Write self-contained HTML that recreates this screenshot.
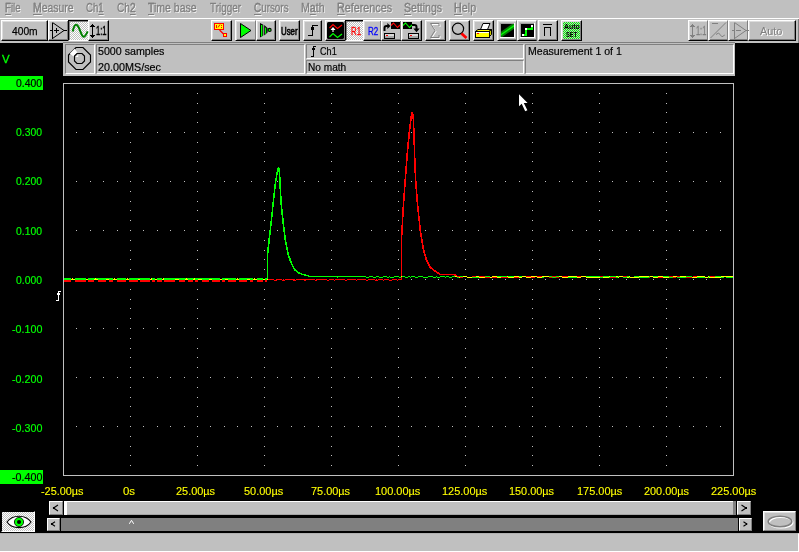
<!DOCTYPE html>
<html>
<head>
<meta charset="utf-8">
<title>Scope</title>
<style>
html,body{margin:0;padding:0;}
body{width:799px;height:552px;background:#000;overflow:hidden;position:relative;
 font-family:"Liberation Sans",sans-serif;font-size:11px;line-height:11px;color:#000;}
div,span,svg{position:absolute;box-sizing:border-box;}
.t{white-space:nowrap;transform-origin:0 0;display:block;}
#menubar{left:0;top:0;width:799px;height:18px;background:#c0c0c0;}
#menubar .t{top:2px;font-size:12.5px;line-height:13px;color:#808080;text-shadow:1px 1px 0 rgba(255,255,255,0.85);-webkit-text-stroke:0.3px #808080;}
#menubar u{text-decoration:underline;text-decoration-thickness:1px;text-underline-offset:1.5px;}
#tbline{left:0;top:18px;width:799px;height:1px;background:#fff;}
#toolbar{left:0;top:19px;width:799px;height:24px;background:#c0c0c0;border-right:1px solid #808080;}
.btn{background:#c0c0c0;height:21px;top:20px;border-top:1px solid #fff;border-left:1px solid #fff;border-right:1px solid #000;border-bottom:1px solid #000;
 box-shadow:inset -1px -1px 0 #808080, inset 1px 1px 0 #dcdcdc;overflow:hidden;}
.btn.down{border-top:1px solid #000;border-left:1px solid #000;border-right:1px solid #fff;border-bottom:1px solid #fff;
 box-shadow:inset 1px 1px 0 #808080;
 background-color:#c0c0c0;background-image:conic-gradient(#fff 25%,#c0c0c0 0 50%,#fff 0 75%,#c0c0c0 0);background-size:2px 2px;}
.btn svg{left:-1px;top:-1px;}
.dis{color:#808080;text-shadow:1px 1px 0 #fff;}
#panel{left:63px;top:42px;width:672px;height:34px;background:#c0c0c0;border-top:1px solid #808080;}
.sunk{background:#c0c0c0;border-top:1px solid #808080;border-left:1px solid #808080;border-right:1px solid #fff;border-bottom:1px solid #fff;}
.ylab{left:0;width:43px;height:14px;color:#00ff00;}
.ylab.hl{background:#00ff00;color:#000;}
.xlab{color:#ffff00;}
.sbtn{background:#c0c0c0;border-top:1px solid #fff;border-left:1px solid #fff;border-right:1px solid #808080;border-bottom:1px solid #808080;}
#status{left:0;top:533px;width:799px;height:19px;background:#c0c0c0;border-top:1px solid #b0b0b0;border-right:1px solid #fff;border-bottom:1px solid #fff;}
</style>
</head>
<body>
<div id="menubar">
<span class="t " style="left:5.20px;top:2.00px;font-size:12.50px;line-height:13px;transform:scaleX(0.7746);"><u>F</u>ile</span>
<span class="t " style="left:33.20px;top:2.00px;font-size:12.50px;line-height:13px;transform:scaleX(0.8349);"><u>M</u>easure</span>
<span class="t " style="left:86.45px;top:2.00px;font-size:12.50px;line-height:13px;transform:scaleX(0.7676);">Ch<u>1</u></span>
<span class="t " style="left:117.20px;top:2.00px;font-size:12.50px;line-height:13px;transform:scaleX(0.8112);">Ch<u>2</u></span>
<span class="t " style="left:147.70px;top:2.00px;font-size:12.50px;line-height:13px;transform:scaleX(0.8395);"><u>T</u>ime base</span>
<span class="t " style="left:210.20px;top:2.00px;font-size:12.50px;line-height:13px;transform:scaleX(0.7948);">Trigger</span>
<span class="t " style="left:254.20px;top:2.00px;font-size:12.50px;line-height:13px;transform:scaleX(0.7908);"><u>C</u>ursors</span>
<span class="t " style="left:300.95px;top:2.00px;font-size:12.50px;line-height:13px;transform:scaleX(0.8493);">M<u>a</u>th</span>
<span class="t " style="left:336.70px;top:2.00px;font-size:12.50px;line-height:13px;transform:scaleX(0.8620);"><u>R</u>eferences</span>
<span class="t " style="left:403.70px;top:2.00px;font-size:12.50px;line-height:13px;transform:scaleX(0.8436);"><u>S</u>ettings</span>
<span class="t " style="left:454.00px;top:2.00px;font-size:12.50px;line-height:13px;transform:scaleX(0.8597);"><u>H</u>elp</span>
</div>
<div id="tbline"></div>
<div id="toolbar"></div>
<div id="tb">
<div class="btn" style="left:1px;top:20px;width:47px;height:21px;"></div>
<div class="btn" style="left:48px;top:20px;width:21px;height:21px;"></div>
<div class="btn down" style="left:68px;top:20px;width:21px;height:21px;"></div>
<div class="btn" style="left:88px;top:20px;width:21px;height:21px;"></div>
<div class="btn" style="left:211px;top:20px;width:21px;height:21px;"></div>
<div class="btn" style="left:235px;top:20px;width:21px;height:21px;border-right-color:#808080;box-shadow:inset 1px 1px 0 #dcdcdc, inset 0 -1px 0 #808080;"></div>
<div class="btn" style="left:256px;top:20px;width:20px;height:21px;"></div>
<div class="btn" style="left:279px;top:20px;width:21px;height:21px;"></div>
<div class="btn" style="left:303px;top:20px;width:19px;height:21px;"></div>
<div class="btn" style="left:325px;top:20px;width:21px;height:21px;"></div>
<div class="btn down" style="left:345px;top:20px;width:19px;height:21px;"></div>
<div class="btn" style="left:363px;top:20px;width:19px;height:21px;border-right-color:#808080;"></div>
<div class="btn" style="left:381px;top:20px;width:21px;height:21px;border-right-color:#808080;"></div>
<div class="btn" style="left:401px;top:20px;width:21px;height:21px;"></div>
<div class="btn" style="left:425px;top:20px;width:21px;height:21px;"></div>
<div class="btn" style="left:449px;top:20px;width:21px;height:21px;"></div>
<div class="btn" style="left:473px;top:20px;width:21px;height:21px;"></div>
<div class="btn" style="left:497px;top:20px;width:20px;height:21px;border-right-color:#808080;box-shadow:inset 1px 1px 0 #dcdcdc, inset 0 -1px 0 #808080;"></div>
<div class="btn" style="left:517px;top:20px;width:20px;height:21px;border-right-color:#808080;box-shadow:inset 1px 1px 0 #dcdcdc, inset 0 -1px 0 #808080;"></div>
<div class="btn" style="left:538px;top:20px;width:20px;height:21px;"></div>
<div class="btn" style="left:561px;top:20px;width:21px;height:21px;background-image:conic-gradient(#00ff00 25%,#c0c0c0 0 50%,#00ff00 0 75%,#c0c0c0 0);background-size:2px 2px;"></div>
<div class="btn" style="left:688px;top:20px;width:20px;height:21px;border-right-color:#808080;box-shadow:inset 1px 1px 0 #dcdcdc, inset 0 -1px 0 #808080;"></div>
<div class="btn" style="left:708px;top:20px;width:20px;height:21px;border-right-color:#808080;box-shadow:inset 1px 1px 0 #dcdcdc, inset 0 -1px 0 #808080;"></div>
<div class="btn" style="left:728px;top:20px;width:20px;height:21px;border-right-color:#808080;box-shadow:inset 1px 1px 0 #dcdcdc, inset 0 -1px 0 #808080;"></div>
<div class="btn" style="left:748px;top:20px;width:48px;height:21px;"></div>
<span class="t " style="left:11.60px;top:25.00px;font-size:11.50px;line-height:13px;transform:scaleX(0.8900);-webkit-text-stroke:0.25px #000;">400m</span>
<span class="t " style="left:95.60px;top:24.50px;font-size:12.00px;line-height:13px;transform:scaleX(0.6355);-webkit-text-stroke:0.45px #000;">1:1</span>
<span class="t " style="left:350.60px;top:26.00px;font-size:10.00px;line-height:11px;transform:scaleX(0.7823);color:#ff0000;-webkit-text-stroke:0.3px #ff0000;">R1</span>
<span class="t " style="left:368.00px;top:25.70px;font-size:10.00px;line-height:11px;transform:scaleX(0.7979);color:#0000ff;-webkit-text-stroke:0.3px #0000ff;">R2</span>
<span class="t " style="left:695.60px;top:24.50px;font-size:12.00px;line-height:13px;transform:scaleX(0.6175);color:#808080;-webkit-text-stroke:0.3px #808080;">1:1</span>
<span class="t dis" style="left:760.20px;top:24.50px;font-size:11.50px;line-height:13px;transform:scaleX(0.9469);">Auto</span>
<span class="t " style="left:281.30px;top:25.80px;font-size:10.00px;line-height:11px;transform:scaleX(0.7863);-webkit-text-stroke:0.55px #000;">User</span>
<span class="t " style="left:563.80px;top:21.80px;font-size:7.50px;line-height:9px;transform:scaleX(0.9253);font-weight:bold;">Auto</span>
<span class="t " style="left:565.80px;top:29.50px;font-size:7.50px;line-height:9px;transform:scaleX(0.7678);font-weight:bold;">SET</span>
</div>
<svg id="icons" width="799" height="60" viewBox="0 0 799 60" style="left:0;top:0;" shape-rendering="crispEdges"><path d="M52.5 22.5 L52.5 38.5" fill="none" stroke="#000" stroke-width="1" />
<path d="M52.5 22.5 L64.0 30.5 L52.5 38.5" fill="none" stroke="#000" stroke-width="1" shape-rendering="geometricPrecision"/>
<path d="M50.0 30.5 L52.0 30.5" fill="none" stroke="#000" stroke-width="1" />
<path d="M64.0 30.5 L67.0 30.5" fill="none" stroke="#000" stroke-width="1" />
<path d="M54.0 30.5 L59.0 30.5" fill="none" stroke="#000" stroke-width="1" />
<path d="M56.5 28.0 L56.5 33.0" fill="none" stroke="#000" stroke-width="1" />
<path d="M72.7 31.5 C73.7 27 74.7 24.8 76.2 24.8 C78.2 24.8 79.2 29 80.2 31 C81.2 33.5 82.2 36.8 83.7 36.8 C85.2 36.8 86.7 33.5 87.7 31.3" fill="none" stroke="#008000" stroke-width="2" shape-rendering="geometricPrecision"/>
<path d="M92.5 25.0 L92.5 37.0" fill="none" stroke="#000" stroke-width="1" />
<polygon points="92.5,23.5 95.0,27.0 90.0,27.0" fill="#000" stroke="none" stroke-width="1" />
<polygon points="92.5,38.5 95.0,35.0 90.0,35.0" fill="#000" stroke="none" stroke-width="1" />
<rect x="214" y="23" width="10" height="7" fill="#ff0000" />
<rect x="215" y="24" width="8" height="5" fill="#ffff00" />
<rect x="216" y="25" width="1" height="3" fill="#ff0000" />
<path d="M218.0 27.5 L220.0 24.5" fill="none" stroke="#ff0000" stroke-width="1" shape-rendering="geometricPrecision"/>
<rect x="221" y="25" width="1" height="1" fill="#ff0000" />
<rect x="221" y="27" width="1" height="1" fill="#ff0000" />
<path d="M219.5 30.0 L225.0 35.5" fill="none" stroke="#ff0000" stroke-width="1.3" shape-rendering="geometricPrecision"/>
<rect x="223" y="33" width="4" height="4" fill="#ff0000" />
<rect x="224" y="34" width="2" height="2" fill="#ffff00" />
<polygon points="240.5,23.5 251.0,30.5 240.5,37.5" fill="#00ff00" stroke="#000" stroke-width="1" shape-rendering="geometricPrecision"/>
<polygon points="260.0,23.0 263.3,24.8 263.3,35.6 260.0,37.4" fill="#000" stroke="none" stroke-width="1" shape-rendering="geometricPrecision"/>
<rect x="261" y="25" width="1.4" height="11.4" fill="#00ff00" shape-rendering="geometricPrecision"/>
<polygon points="264.2,25.0 267.6,28.0 267.6,32.4 264.2,35.4" fill="#000" stroke="none" stroke-width="1" shape-rendering="geometricPrecision"/>
<rect x="265" y="27.6" width="1.2" height="6.2" fill="#00ff00" shape-rendering="geometricPrecision"/>
<circle cx="269.6" cy="29.9" r="2.1" fill="#000" shape-rendering="geometricPrecision"/>
<circle cx="269.6" cy="29.9" r="1" fill="#00ff00" shape-rendering="geometricPrecision"/>
<path d="M308.0 35.5 L313.0 35.5" fill="none" stroke="#000" stroke-width="1" />
<path d="M312.5 25.0 L312.5 36.0" fill="none" stroke="#000" stroke-width="1" />
<path d="M312.0 25.5 L318.0 25.5" fill="none" stroke="#000" stroke-width="1" />
<rect x="311" y="27" width="3" height="3" fill="#000" />
<rect x="327" y="22" width="17" height="17" rx="1.5" fill="#000" shape-rendering="geometricPrecision"/>
<path d="M329.5 28.0 L333.0 24.5 L337.5 28.5 L342.0 25.0" fill="none" stroke="#ff0000" stroke-width="1.2" shape-rendering="geometricPrecision"/>
<path d="M329.5 37.0 L333.0 33.5 L337.5 37.5 L342.0 34.0" fill="none" stroke="#00ff00" stroke-width="1.2" shape-rendering="geometricPrecision"/>
<path d="M333.0 28.5 L333.0 32.0" fill="none" stroke="#fff" stroke-width="1.1" shape-rendering="geometricPrecision"/>
<polygon points="333.0,27.0 335.5,30.0 330.5,30.0" fill="#fff" stroke="none" stroke-width="1" shape-rendering="geometricPrecision"/>
<rect x="391" y="22" width="9" height="7" fill="#000" />
<path d="M391.0 25.5 L393.5 23.0 L397.5 27.5 L400.0 25.0" fill="none" stroke="#ff0000" stroke-width="1.1" shape-rendering="geometricPrecision"/>
<path d="M384.5 31 V28 Q384.5 26 386.5 26 H388" fill="none" stroke="#000" stroke-width="2" shape-rendering="geometricPrecision"/>
<polygon points="387.3,23.0 390.5,26.0 387.3,29.0" fill="#000" stroke="none" stroke-width="1" shape-rendering="geometricPrecision"/>
<rect x="384" y="33" width="11" height="6" fill="#000" />
<rect x="385" y="34" width="9" height="4" fill="#d8d8d8" />
<rect x="385" y="36" width="9" height="2" fill="#a8a8a8" />
<rect x="386" y="35" width="2" height="1" fill="#ff0000" />
<rect x="403" y="22" width="9" height="7" fill="#000" />
<path d="M403.0 25.5 L405.5 23.0 L409.5 27.5 L412.0 25.0" fill="none" stroke="#00ff00" stroke-width="1.1" shape-rendering="geometricPrecision"/>
<path d="M412 25 H414.5 Q416.5 25 416.5 27 V29" fill="none" stroke="#000" stroke-width="2" shape-rendering="geometricPrecision"/>
<polygon points="413.3,28.6 419.7,28.6 416.5,32.2" fill="#000" stroke="none" stroke-width="1" shape-rendering="geometricPrecision"/>
<rect x="408" y="33" width="11" height="6" fill="#000" />
<rect x="409" y="34" width="9" height="4" fill="#d8d8d8" />
<rect x="409" y="36" width="9" height="2" fill="#a8a8a8" />
<rect x="410" y="35" width="2" height="1" fill="#ff0000" />
<path d="M440.0 27.0 L440.0 24.5 L431.5 24.5 L436.0 31.5 L431.5 38.5 L440.0 38.5 L440.0 36.0" fill="none" stroke="#fff" stroke-width="1" shape-rendering="geometricPrecision"/>
<path d="M439.0 26.0 L439.0 23.5 L430.5 23.5 L435.0 30.5 L430.5 37.5 L439.0 37.5 L439.0 35.0" fill="none" stroke="#808080" stroke-width="1" shape-rendering="geometricPrecision"/>
<circle cx="458" cy="28.8" r="5.6" fill="none" stroke="#000" stroke-width="1.2" shape-rendering="geometricPrecision"/>
<path d="M461.5 33.5 L466.5 38.0" fill="none" stroke="#ff0000" stroke-width="2.8" shape-rendering="geometricPrecision"/>
<polygon points="483.0,23.5 490.0,23.5 487.5,29.5 480.5,29.5" fill="#fff" stroke="#000" stroke-width="1" shape-rendering="geometricPrecision"/>
<polygon points="478.0,29.5 491.5,29.5 489.0,31.5 475.5,31.5" fill="#ffff00" stroke="#000" stroke-width="1" shape-rendering="geometricPrecision"/>
<polygon points="491.5,29.5 491.5,34.5 489.0,37.0 489.0,31.5" fill="#c8c800" stroke="#000" stroke-width="1" shape-rendering="geometricPrecision"/>
<rect x="475" y="31" width="15" height="7" fill="#000" />
<rect x="476" y="32" width="13" height="5" fill="#ffff00" />
<rect x="476" y="32" width="13" height="1" fill="#fff" />
<rect x="477" y="33" width="2" height="1" fill="#ff0000" />
<rect x="500" y="23" width="15" height="15" fill="#fff" />
<rect x="500" y="23" width="14" height="14" fill="#a0a0a0" />
<rect x="501" y="24" width="13" height="13" fill="#000" />
<clipPath id="c1"><rect x="501" y="24" width="13" height="13"/></clipPath>
<g clip-path="url(#c1)" shape-rendering="geometricPrecision"><path d="M500 35.5 L515 25" stroke="#008000" stroke-width="5" fill="none"/><path d="M500 35.5 L515 25" stroke="#00ff00" stroke-width="1.3" fill="none"/></g>
<rect x="520" y="23" width="15" height="15" fill="#fff" />
<rect x="520" y="23" width="14" height="14" fill="#a0a0a0" />
<rect x="521" y="24" width="13" height="13" fill="#000" />
<path d="M523.0 35.0 L526.0 35.0 L526.0 29.0 L532.0 29.0 L532.0 26.0" fill="none" stroke="#00ff00" stroke-width="2" />
<rect x="522" y="34" width="2" height="2" fill="#fff" />
<rect x="525" y="28" width="2" height="2" fill="#fff" />
<rect x="531" y="25" width="2" height="2" fill="#fff" />
<path d="M543.0 24.5 L552.0 24.5" fill="none" stroke="#000" stroke-width="1" />
<path d="M544.5 35.5 L544.5 27.5 L550.5 27.5 L550.5 35.5" fill="none" stroke="#000" stroke-width="1" />
<path d="M692.5 25.0 L692.5 37.0" fill="none" stroke="#808080" stroke-width="1" />
<polygon points="692.5,23.5 695.0,27.0 690.0,27.0" fill="#808080" stroke="none" stroke-width="1" />
<polygon points="692.5,38.5 695.0,35.0 690.0,35.0" fill="#808080" stroke="none" stroke-width="1" />
<path d="M710.5 38.0 L726.0 22.5" fill="none" stroke="#808080" stroke-width="1" shape-rendering="geometricPrecision"/>
<path d="M712.0 23.5 L718.0 23.5" fill="none" stroke="#808080" stroke-width="1" />
<path d="M716.0 34.5 L718.6 33.0 L722.0 36.8 L724.8 35.0" fill="none" stroke="#808080" stroke-width="1" shape-rendering="geometricPrecision"/>
<path d="M734.5 22.5 L734.5 38.5" fill="none" stroke="#808080" stroke-width="1" />
<path d="M734.5 22.5 L746.0 30.5 L734.5 38.5" fill="none" stroke="#808080" stroke-width="1" shape-rendering="geometricPrecision"/>
<path d="M732.0 30.5 L734.0 30.5" fill="none" stroke="#808080" stroke-width="1" />
<path d="M746.0 30.5 L749.0 30.5" fill="none" stroke="#808080" stroke-width="1" />
<path d="M736.0 30.5 L741.0 30.5" fill="none" stroke="#808080" stroke-width="1" /></svg>
<div id="panel"></div>
<div class="sunk" style="left:65px;top:44px;width:30px;height:30px;"></div>
<div class="sunk" style="left:96px;top:44px;width:209px;height:30px;"></div>
<div class="sunk" style="left:306px;top:44px;width:218px;height:15px;"></div>
<div class="sunk" style="left:306px;top:60px;width:218px;height:14px;"></div>
<div class="sunk" style="left:525px;top:44px;width:209px;height:30px;"></div>
<span class="t " style="left:98.30px;top:44.50px;font-size:11.00px;line-height:12px;transform:scaleX(0.9696);-webkit-text-stroke:0.2px #000;">5000 samples</span>
<span class="t " style="left:98.30px;top:61.00px;font-size:11.00px;line-height:12px;transform:scaleX(0.9814);-webkit-text-stroke:0.2px #000;">20.00MS/sec</span>
<span class="t " style="left:319.75px;top:44.50px;font-size:11.00px;line-height:12px;transform:scaleX(0.8301);-webkit-text-stroke:0.2px #000;">Ch1</span>
<span class="t " style="left:307.90px;top:61.00px;font-size:11.00px;line-height:12px;transform:scaleX(0.9189);-webkit-text-stroke:0.2px #000;">No math</span>
<span class="t " style="left:528.00px;top:44.50px;font-size:11.00px;line-height:12px;transform:scaleX(0.9589);-webkit-text-stroke:0.2px #000;">Measurement 1 of 1</span>
<svg width="799" height="40" viewBox="0 40 799 40" style="left:0;top:40px;" shape-rendering="crispEdges"><polygon points="76,47.5 83,47.5 90.5,55 90.5,62 83,69.5 76,69.5 68.5,62 68.5,55" fill="none" stroke="#000" stroke-width="1.15" shape-rendering="geometricPrecision"/>
<polygon points="69.8,53.6 74.6,48.8 77.4,52.6 73.6,56.4" fill="#fff" shape-rendering="geometricPrecision"/>
<polygon points="77,53.5 82,53.5 84.5,56 84.5,61 82,63.5 77,63.5 74.5,61 74.5,56" fill="none" stroke="#000" stroke-width="1.15" shape-rendering="geometricPrecision"/>
<polygon points="75.4,57 78.2,54.8 78.2,57" fill="#fff" shape-rendering="geometricPrecision"/>
<path d="M311 56.5 H314 M313.5 46 V57 M313 46.5 H316" stroke="#000" stroke-width="1" fill="none"/>
<rect x="312" y="48" width="3" height="2" fill="#000"/></svg>
<svg id="plot" width="799" height="420" viewBox="0 80 799 420" style="left:0;top:80px;" shape-rendering="crispEdges"><rect x="63.5" y="83.5" width="670" height="392" fill="none" stroke="#c0c0c0" stroke-width="1"/>
<path d="M130 93h1M130 103h1M130 112h1M130 122h1M130 132h1M130 142h1M130 152h1M130 161h1M130 171h1M130 181h1M130 191h1M130 201h1M130 210h1M130 220h1M130 230h1M130 240h1M130 250h1M130 259h1M130 269h1M130 279h1M130 289h1M130 299h1M130 308h1M130 318h1M130 328h1M130 338h1M130 348h1M130 357h1M130 367h1M130 377h1M130 387h1M130 397h1M130 406h1M130 416h1M130 426h1M130 436h1M130 446h1M130 455h1M130 465h1M197 93h1M197 103h1M197 112h1M197 122h1M197 132h1M197 142h1M197 152h1M197 161h1M197 171h1M197 181h1M197 191h1M197 201h1M197 210h1M197 220h1M197 230h1M197 240h1M197 250h1M197 259h1M197 269h1M197 279h1M197 289h1M197 299h1M197 308h1M197 318h1M197 328h1M197 338h1M197 348h1M197 357h1M197 367h1M197 377h1M197 387h1M197 397h1M197 406h1M197 416h1M197 426h1M197 436h1M197 446h1M197 455h1M197 465h1M264 93h1M264 103h1M264 112h1M264 122h1M264 132h1M264 142h1M264 152h1M264 161h1M264 171h1M264 181h1M264 191h1M264 201h1M264 210h1M264 220h1M264 230h1M264 240h1M264 250h1M264 259h1M264 269h1M264 279h1M264 289h1M264 299h1M264 308h1M264 318h1M264 328h1M264 338h1M264 348h1M264 357h1M264 367h1M264 377h1M264 387h1M264 397h1M264 406h1M264 416h1M264 426h1M264 436h1M264 446h1M264 455h1M264 465h1M331 93h1M331 103h1M331 112h1M331 122h1M331 132h1M331 142h1M331 152h1M331 161h1M331 171h1M331 181h1M331 191h1M331 201h1M331 210h1M331 220h1M331 230h1M331 240h1M331 250h1M331 259h1M331 269h1M331 279h1M331 289h1M331 299h1M331 308h1M331 318h1M331 328h1M331 338h1M331 348h1M331 357h1M331 367h1M331 377h1M331 387h1M331 397h1M331 406h1M331 416h1M331 426h1M331 436h1M331 446h1M331 455h1M331 465h1M398 93h1M398 103h1M398 112h1M398 122h1M398 132h1M398 142h1M398 152h1M398 161h1M398 171h1M398 181h1M398 191h1M398 201h1M398 210h1M398 220h1M398 230h1M398 240h1M398 250h1M398 259h1M398 269h1M398 279h1M398 289h1M398 299h1M398 308h1M398 318h1M398 328h1M398 338h1M398 348h1M398 357h1M398 367h1M398 377h1M398 387h1M398 397h1M398 406h1M398 416h1M398 426h1M398 436h1M398 446h1M398 455h1M398 465h1M465 93h1M465 103h1M465 112h1M465 122h1M465 132h1M465 142h1M465 152h1M465 161h1M465 171h1M465 181h1M465 191h1M465 201h1M465 210h1M465 220h1M465 230h1M465 240h1M465 250h1M465 259h1M465 269h1M465 279h1M465 289h1M465 299h1M465 308h1M465 318h1M465 328h1M465 338h1M465 348h1M465 357h1M465 367h1M465 377h1M465 387h1M465 397h1M465 406h1M465 416h1M465 426h1M465 436h1M465 446h1M465 455h1M465 465h1M532 93h1M532 103h1M532 112h1M532 122h1M532 132h1M532 142h1M532 152h1M532 161h1M532 171h1M532 181h1M532 191h1M532 201h1M532 210h1M532 220h1M532 230h1M532 240h1M532 250h1M532 259h1M532 269h1M532 279h1M532 289h1M532 299h1M532 308h1M532 318h1M532 328h1M532 338h1M532 348h1M532 357h1M532 367h1M532 377h1M532 387h1M532 397h1M532 406h1M532 416h1M532 426h1M532 436h1M532 446h1M532 455h1M532 465h1M599 93h1M599 103h1M599 112h1M599 122h1M599 132h1M599 142h1M599 152h1M599 161h1M599 171h1M599 181h1M599 191h1M599 201h1M599 210h1M599 220h1M599 230h1M599 240h1M599 250h1M599 259h1M599 269h1M599 279h1M599 289h1M599 299h1M599 308h1M599 318h1M599 328h1M599 338h1M599 348h1M599 357h1M599 367h1M599 377h1M599 387h1M599 397h1M599 406h1M599 416h1M599 426h1M599 436h1M599 446h1M599 455h1M599 465h1M666 93h1M666 103h1M666 112h1M666 122h1M666 132h1M666 142h1M666 152h1M666 161h1M666 171h1M666 181h1M666 191h1M666 201h1M666 210h1M666 220h1M666 230h1M666 240h1M666 250h1M666 259h1M666 269h1M666 279h1M666 289h1M666 299h1M666 308h1M666 318h1M666 328h1M666 338h1M666 348h1M666 357h1M666 367h1M666 377h1M666 387h1M666 397h1M666 406h1M666 416h1M666 426h1M666 436h1M666 446h1M666 455h1M666 465h1M76 132h1M90 132h1M103 132h1M117 132h1M143 132h1M157 132h1M170 132h1M184 132h1M210 132h1M224 132h1M237 132h1M251 132h1M277 132h1M291 132h1M304 132h1M318 132h1M344 132h1M358 132h1M371 132h1M385 132h1M411 132h1M425 132h1M438 132h1M452 132h1M478 132h1M492 132h1M505 132h1M519 132h1M545 132h1M559 132h1M572 132h1M586 132h1M612 132h1M626 132h1M639 132h1M653 132h1M679 132h1M693 132h1M706 132h1M720 132h1M76 181h1M90 181h1M103 181h1M117 181h1M143 181h1M157 181h1M170 181h1M184 181h1M210 181h1M224 181h1M237 181h1M251 181h1M277 181h1M291 181h1M304 181h1M318 181h1M344 181h1M358 181h1M371 181h1M385 181h1M411 181h1M425 181h1M438 181h1M452 181h1M478 181h1M492 181h1M505 181h1M519 181h1M545 181h1M559 181h1M572 181h1M586 181h1M612 181h1M626 181h1M639 181h1M653 181h1M679 181h1M693 181h1M706 181h1M720 181h1M76 230h1M90 230h1M103 230h1M117 230h1M143 230h1M157 230h1M170 230h1M184 230h1M210 230h1M224 230h1M237 230h1M251 230h1M277 230h1M291 230h1M304 230h1M318 230h1M344 230h1M358 230h1M371 230h1M385 230h1M411 230h1M425 230h1M438 230h1M452 230h1M478 230h1M492 230h1M505 230h1M519 230h1M545 230h1M559 230h1M572 230h1M586 230h1M612 230h1M626 230h1M639 230h1M653 230h1M679 230h1M693 230h1M706 230h1M720 230h1M76 279h1M90 279h1M103 279h1M117 279h1M143 279h1M157 279h1M170 279h1M184 279h1M210 279h1M224 279h1M237 279h1M251 279h1M277 279h1M291 279h1M304 279h1M318 279h1M344 279h1M358 279h1M371 279h1M385 279h1M411 279h1M425 279h1M438 279h1M452 279h1M478 279h1M492 279h1M505 279h1M519 279h1M545 279h1M559 279h1M572 279h1M586 279h1M612 279h1M626 279h1M639 279h1M653 279h1M679 279h1M693 279h1M706 279h1M720 279h1M76 328h1M90 328h1M103 328h1M117 328h1M143 328h1M157 328h1M170 328h1M184 328h1M210 328h1M224 328h1M237 328h1M251 328h1M277 328h1M291 328h1M304 328h1M318 328h1M344 328h1M358 328h1M371 328h1M385 328h1M411 328h1M425 328h1M438 328h1M452 328h1M478 328h1M492 328h1M505 328h1M519 328h1M545 328h1M559 328h1M572 328h1M586 328h1M612 328h1M626 328h1M639 328h1M653 328h1M679 328h1M693 328h1M706 328h1M720 328h1M76 377h1M90 377h1M103 377h1M117 377h1M143 377h1M157 377h1M170 377h1M184 377h1M210 377h1M224 377h1M237 377h1M251 377h1M277 377h1M291 377h1M304 377h1M318 377h1M344 377h1M358 377h1M371 377h1M385 377h1M411 377h1M425 377h1M438 377h1M452 377h1M478 377h1M492 377h1M505 377h1M519 377h1M545 377h1M559 377h1M572 377h1M586 377h1M612 377h1M626 377h1M639 377h1M653 377h1M679 377h1M693 377h1M706 377h1M720 377h1M76 426h1M90 426h1M103 426h1M117 426h1M143 426h1M157 426h1M170 426h1M184 426h1M210 426h1M224 426h1M237 426h1M251 426h1M277 426h1M291 426h1M304 426h1M318 426h1M344 426h1M358 426h1M371 426h1M385 426h1M411 426h1M425 426h1M438 426h1M452 426h1M478 426h1M492 426h1M505 426h1M519 426h1M545 426h1M559 426h1M572 426h1M586 426h1M612 426h1M626 426h1M639 426h1M653 426h1M679 426h1M693 426h1M706 426h1M720 426h1" stroke="#c0c0c0" stroke-width="1" fill="none" transform="translate(0,0.5)"/>
<path d="M426 257v5M406 153v21M414 128v45M419 216v15M411 112v9M429 264v4M404 179v22M422 239v10M405 166v21M416 181v21M410 116v13M421 233v10M409 124v15M413 114v31M402 207v28M403 193v24M401 225v51M401 277v3M425 254v6M418 206v15M428 262v4M415 158v31M424 250v6M408 132v17M407 142v19M417 194v18M420 225v12M423 245v8M412 112v7M430 266v3M427 260v4" stroke="#ff0000" stroke-width="1" fill="none" transform="translate(0.5,0)"/>
<path d="M64 281h7M75 281h11M88 281h6M98 281h8M109 281h4M117 281h9M129 281h9M140 281h10M152 281h3M157 281h5M164 281h11M179 281h6M188 281h5M195 281h3M202 281h7M212 281h8M222 281h3M228 281h8M239 281h8M250 281h3M257 281h6M265 281h2M460 277h3M485 277h5M492 277h5M501 277h7M514 277h5M531 277h4M549 277h3M556 277h3M610 277h6M649 277h1M658 277h5M673 277h3M686 277h6M268 279h6M276 279h6M283 279h1M285 279h10M296 279h19M316 279h11M329 279h5M335 279h10M347 279h9M357 279h9M368 279h7M376 279h1M378 279h5M384 279h5M392 279h5M398 279h3M64 280h7M75 280h11M88 280h6M98 280h8M109 280h4M117 280h9M129 280h9M140 280h10M152 280h3M157 280h5M164 280h11M179 280h6M188 280h5M195 280h3M202 280h7M212 280h8M222 280h3M228 280h8M239 280h8M250 280h3M257 280h6M265 280h2M274 280h3M282 280h3M293 280h3M304 280h2M315 280h2M327 280h2M334 280h1M345 280h2M356 280h1M366 280h2M375 280h3M383 280h1M389 280h3M397 280h1M439 274h17M457 276h3M472 276h4M479 276h6M526 276h5M537 276h5M552 276h4M562 276h6M577 276h4M600 276h3M623 276h4M669 276h4M677 276h3M693 276h4M710 276h5M431 267h1M454 275h3M433 270h3M437 273h3M436 272h3M432 269h2M434 271h3M431 268h2" stroke="#ff0000" stroke-width="1" fill="none" transform="translate(0,0.5)"/>
<path d="M280 177v28M282 209v15M271 212v14M276 172v9M279 168v21M285 235v10M270 221v14M275 178v11M288 252v6M269 230v14M281 196v19M291 261v4M274 184v14M292 264v3M284 227v13M268 238v15M273 193v14M267 247v32M278 167v5M287 247v8M290 258v5M293 266v3M286 242v8M272 202v15M277 168v7M283 218v14M289 256v5M294 268v3" stroke="#00ff00" stroke-width="1" fill="none" transform="translate(0.5,0)"/>
<path d="M64 278h7M75 278h11M88 278h7M96 278h17M117 278h9M129 278h21M152 278h3M157 278h5M164 278h22M187 278h7M195 278h25M222 278h14M239 278h14M257 278h6M265 278h2M308 276h58M369 276h4M376 276h3M383 276h4M389 276h1M394 276h5M402 276h3M408 276h2M411 276h4M418 276h5M428 276h5M436 276h1M440 276h5M446 276h3M452 276h3M460 276h3M485 276h5M497 276h10M508 276h6M519 276h3M549 276h3M556 276h3M586 276h14M603 276h6M610 276h6M618 276h1M627 276h2M634 276h5M649 276h1M653 276h5M663 276h6M686 276h6M709 276h1M715 276h6M337 277h1M366 277h3M373 277h3M379 277h4M387 277h2M390 277h4M399 277h2M405 277h3M410 277h1M415 277h3M423 277h5M433 277h3M437 277h3M445 277h1M449 277h3M457 277h2M472 277h7M542 277h2M552 277h4M568 277h9M600 277h3M609 277h1M616 277h2M623 277h4M629 277h1M639 277h10M669 277h4M677 277h9M697 277h8M708 277h1M721 277h3M726 277h7M64 279h7M75 279h11M88 279h6M98 279h8M109 279h4M117 279h9M129 279h9M140 279h10M152 279h3M157 279h5M164 279h11M179 279h6M188 279h5M195 279h3M202 279h7M212 279h8M222 279h3M228 279h8M239 279h8M250 279h3M257 279h6M265 279h2M298 273h4M301 274h5M295 270h2M295 269h1M297 272h3M304 275h5M296 271h2" stroke="#00ff00" stroke-width="1" fill="none" transform="translate(0,0.5)"/>
<path d="M459 277h1M467 277h5M479 277h6M490 277h2M497 277h4M508 277h6M519 277h3M526 277h5M537 277h5M562 277h6M577 277h4M586 277h14M603 277h6M618 277h1M627 277h2M630 277h9M653 277h5M663 277h6M692 277h5M705 277h3M709 277h12M72 278h1M95 278h1M114 278h1M127 278h1M151 278h1M163 278h1M186 278h1M194 278h1M237 278h1M254 278h1M401 276h1M455 276h2M463 276h4M476 276h3M492 276h5M507 276h1M514 276h5M522 276h4M531 276h6M542 276h7M559 276h3M568 276h9M581 276h5M609 276h1M616 276h2M619 276h4M629 276h1M639 276h10M650 276h3M658 276h5M673 276h4M680 276h6M697 276h8M708 276h1M721 276h12M71 279h4M86 279h2M94 279h4M106 279h3M113 279h4M126 279h3M138 279h2M150 279h2M155 279h2M162 279h2M175 279h4M185 279h3M193 279h2M198 279h4M209 279h3M220 279h2M225 279h3M236 279h3M247 279h3M253 279h4M263 279h2M267 279h1" stroke="#ffff00" stroke-width="1" fill="none" transform="translate(0,0.5)"/></svg>
<div class="ylab hl" style="top:76px"></div>
<span class="t " style="left:16.30px;top:76.50px;font-size:11.00px;line-height:12px;transform:scaleX(0.9446);color:#000;-webkit-text-stroke:0.2px #000;">0.400</span>
<span class="t " style="left:16.30px;top:125.50px;font-size:11.00px;line-height:12px;transform:scaleX(0.9446);color:#00ff00;-webkit-text-stroke:0.2px #00ff00;">0.300</span>
<span class="t " style="left:16.30px;top:174.50px;font-size:11.00px;line-height:12px;transform:scaleX(0.9446);color:#00ff00;-webkit-text-stroke:0.2px #00ff00;">0.200</span>
<span class="t " style="left:16.30px;top:224.50px;font-size:11.00px;line-height:12px;transform:scaleX(0.9446);color:#00ff00;-webkit-text-stroke:0.2px #00ff00;">0.100</span>
<span class="t " style="left:16.30px;top:273.50px;font-size:11.00px;line-height:12px;transform:scaleX(0.9446);color:#00ff00;-webkit-text-stroke:0.2px #00ff00;">0.000</span>
<span class="t " style="left:11.90px;top:322.50px;font-size:11.00px;line-height:12px;transform:scaleX(0.9748);color:#00ff00;-webkit-text-stroke:0.2px #00ff00;">-0.100</span>
<span class="t " style="left:11.90px;top:372.50px;font-size:11.00px;line-height:12px;transform:scaleX(0.9748);color:#00ff00;-webkit-text-stroke:0.2px #00ff00;">-0.200</span>
<span class="t " style="left:11.90px;top:421.50px;font-size:11.00px;line-height:12px;transform:scaleX(0.9748);color:#00ff00;-webkit-text-stroke:0.2px #00ff00;">-0.300</span>
<div class="ylab hl" style="top:470px"></div>
<span class="t " style="left:11.90px;top:470.50px;font-size:11.00px;line-height:12px;transform:scaleX(0.9748);color:#000;-webkit-text-stroke:0.2px #000;">-0.400</span>
<span class="t " style="left:2.30px;top:53.30px;font-size:11.00px;line-height:12px;transform:scaleX(1.0358);color:#00ff00;-webkit-text-stroke:0.3px #00ff00;">V</span>
<span class="t xlab" style="left:40.65px;top:484.50px;font-size:11.00px;line-height:12px;transform:scaleX(0.9889);-webkit-text-stroke:0.1px #ffff00;">-25.00µs</span>
<span class="t xlab" style="left:123.15px;top:484.50px;font-size:11.00px;line-height:12px;transform:scaleX(1.0373);-webkit-text-stroke:0.1px #ffff00;">0s</span>
<span class="t xlab" style="left:175.65px;top:484.50px;font-size:11.00px;line-height:12px;transform:scaleX(0.9921);-webkit-text-stroke:0.1px #ffff00;">25.00µs</span>
<span class="t xlab" style="left:243.90px;top:484.50px;font-size:11.00px;line-height:12px;transform:scaleX(0.9984);-webkit-text-stroke:0.1px #ffff00;">50.00µs</span>
<span class="t xlab" style="left:310.65px;top:484.50px;font-size:11.00px;line-height:12px;transform:scaleX(0.9921);-webkit-text-stroke:0.1px #ffff00;">75.00µs</span>
<span class="t xlab" style="left:374.90px;top:484.50px;font-size:11.00px;line-height:12px;transform:scaleX(0.9960);-webkit-text-stroke:0.1px #ffff00;">100.00µs</span>
<span class="t xlab" style="left:441.90px;top:484.50px;font-size:11.00px;line-height:12px;transform:scaleX(0.9960);-webkit-text-stroke:0.1px #ffff00;">125.00µs</span>
<span class="t xlab" style="left:508.90px;top:484.50px;font-size:11.00px;line-height:12px;transform:scaleX(0.9905);-webkit-text-stroke:0.1px #ffff00;">150.00µs</span>
<span class="t xlab" style="left:576.90px;top:484.50px;font-size:11.00px;line-height:12px;transform:scaleX(0.9960);-webkit-text-stroke:0.1px #ffff00;">175.00µs</span>
<span class="t xlab" style="left:643.90px;top:484.50px;font-size:11.00px;line-height:12px;transform:scaleX(0.9905);-webkit-text-stroke:0.1px #ffff00;">200.00µs</span>
<span class="t xlab" style="left:711.15px;top:484.50px;font-size:11.00px;line-height:12px;transform:scaleX(0.9960);-webkit-text-stroke:0.1px #ffff00;">225.00µs</span>
<svg width="12" height="14" viewBox="54 289 12 14" style="left:54px;top:289px;" shape-rendering="crispEdges"><path d="M56 300.5H59 M58.5 291V301 M58 291.5H61" stroke="#fff" stroke-width="1" fill="none"/><rect x="57" y="293" width="3" height="2" fill="#fff"/></svg>
<svg width="16" height="24" viewBox="515 90 16 24" style="left:515px;top:90px;" shape-rendering="geometricPrecision"><path d="M519 94.3 V106.3 L521.7 103.8 L525.2 111.3 L527.4 110.3 L523.8 102.9 H527.6 Z" fill="#fff"/></svg>
<div class="sbtn" style="left:49px;top:501px;width:14px;height:14px;"></div>
<div style="left:64px;top:501px;width:672px;height:14px;background:#c0c0c0;border-top:1px solid #fff;border-bottom:1px solid #a4a4a4;"></div>
<div style="left:64px;top:501px;width:3px;height:14px;background:#fff;"></div>
<div style="left:733px;top:501px;width:3px;height:14px;background:#808080;"></div>
<div class="sbtn" style="left:737px;top:501px;width:14px;height:14px;"></div>
<div class="sbtn" style="left:47px;top:518px;width:13px;height:13px;"></div>
<div style="left:61px;top:518px;width:677px;height:13px;background:#808080;"></div>
<div class="sbtn" style="left:739px;top:518px;width:13px;height:13px;"></div>
<div style="left:1px;top:511px;width:34px;height:21px;border-top:1px solid #000;border-left:1px solid #000;border-right:1px solid #fff;border-bottom:1px solid #fff;background-color:#c0c0c0;background-image:conic-gradient(#fff 25%,#c0c0c0 0 50%,#fff 0 75%,#c0c0c0 0);background-size:2px 2px;"></div>
<div style="left:763px;top:511px;width:33px;height:20px;background:#c0c0c0;border-top:1px solid #fff;border-left:1px solid #fff;border-right:1px solid #808080;border-bottom:1px solid #808080;box-shadow:inset 1px 1px 0 #e0e0e0;"></div>
<svg width="799" height="40" viewBox="0 498 799 40" style="left:0;top:498px;" shape-rendering="crispEdges"><path d="M58 505 L53.5 508 L58 511" fill="none" stroke="#000" stroke-width="1.1" shape-rendering="geometricPrecision"/>
<rect x="53" y="507" width="2" height="2" fill="#000"/>
<path d="M741.5 505 L746 508 L741.5 511" fill="none" stroke="#000" stroke-width="1.1" shape-rendering="geometricPrecision"/>
<rect x="745" y="507" width="2" height="2" fill="#000"/>
<path d="M55 521.8 L51.6 524 L55 526.2" fill="none" stroke="#000" stroke-width="1.05" shape-rendering="geometricPrecision"/>
<rect x="51.2" y="523.4" width="1.5" height="1.3" fill="#000"/>
<path d="M743.5 521.8 L746.9 524 L743.5 526.2" fill="none" stroke="#000" stroke-width="1.05" shape-rendering="geometricPrecision"/>
<rect x="745.9" y="523.4" width="1.5" height="1.3" fill="#000"/>
<path d="M129.3 523.8 L131.5 520.3 L133.7 523.8" fill="none" stroke="#ffffff" stroke-width="1" shape-rendering="geometricPrecision"/>
<path d="M7 522 C10 517.6 14 516.2 19 516.2 C24 516.2 28 517.6 31 522 C28 526.4 24 527.6 19 527.6 C14 527.6 10 526.4 7 522 Z" fill="#fff" stroke="#000" stroke-width="1.1" shape-rendering="geometricPrecision"/>
<circle cx="19" cy="522" r="4.6" fill="#00ff00" stroke="#000" stroke-width="0.8" shape-rendering="geometricPrecision"/>
<circle cx="19" cy="522" r="2" fill="#000" shape-rendering="geometricPrecision"/>
<ellipse cx="781" cy="522.5" rx="11.8" ry="5.3" fill="none" stroke="#fff" stroke-width="1.5" shape-rendering="geometricPrecision"/>
<ellipse cx="780" cy="521.5" rx="11.8" ry="5.3" fill="none" stroke="#808080" stroke-width="1.5" shape-rendering="geometricPrecision"/></svg>
<div id="status"></div>
</body>
</html>
